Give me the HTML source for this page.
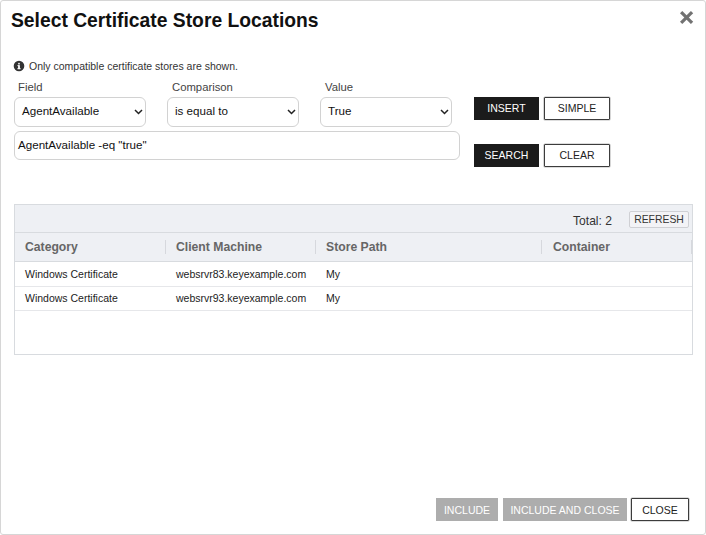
<!DOCTYPE html>
<html><head><meta charset="utf-8">
<style>
*{box-sizing:border-box;margin:0;padding:0}
html,body{width:706px;height:535px;overflow:hidden;background:#fff;font-family:"Liberation Sans",sans-serif}
.dlg{position:absolute;left:0;top:0;width:706px;height:535px;border:1px solid #d6d6d6;border-radius:3px;background:#fff}
.abs{position:absolute;white-space:nowrap}
.title{left:11px;top:7.8px;font-size:19.3px;font-weight:bold;color:#111;line-height:24px;transform:scaleY(1.05);transform-origin:50% 0}
.info{left:29px;top:59px;font-size:10.5px;color:#333;line-height:14px}
.lbl{top:80px;font-size:11.3px;color:#444;line-height:14px}
.sel{top:97px;width:132px;height:29.6px;border:1px solid #d2d2d2;border-radius:6px;background:#fff}
.sel span{position:absolute;left:7px;top:6px;font-size:11.6px;color:#111;line-height:14px}
.sel svg{position:absolute;right:2px;top:11px}
.inp{left:14px;top:131px;width:446px;height:29px;border:1px solid #d2d2d2;border-radius:6px;background:#fff}
.inp span{position:absolute;left:3px;top:6px;font-size:11.6px;color:#111;line-height:14px}
.btn{height:22px;font-size:10.5px;line-height:20px;padding-top:0;text-align:center;border:1px solid #3c3c3c;color:#222;background:#fff;border-radius:1px;box-shadow:0 0 0 0.6px rgba(60,60,60,.35)}
.btn.dark{background:#1b1b1b;color:#fff;border-color:#1b1b1b;box-shadow:none;border-radius:0}
.btn.gray{background:#adadad;color:#fff;border-color:#adadad;box-shadow:none;border-radius:0}
.tbl{left:14px;top:204px;width:679px;height:151px;border:1px solid #d8dbdf;background:#fff}
.bar{position:absolute;left:0;top:0;width:677px;height:28px;background:#eef0f4;border-bottom:1px solid #d8dbdf}
.hdr{position:absolute;left:0;top:28px;width:677px;height:29px;background:#eef0f4;border-bottom:1px solid #d8dbdf}
.hdr span{position:absolute;top:7px;font-size:12.2px;font-weight:bold;color:#666;line-height:14px}
.sep{position:absolute;top:7px;width:1px;height:14px;background:#d6d8dd}
.row{position:absolute;left:0;width:677px;height:25px;border-bottom:1px solid #e6e7ea}
.row span{position:absolute;top:5px;font-size:10.5px;color:#222;line-height:14px}
.r2 span{top:4px}
</style></head><body>
<div class="dlg">
</div>
<div class="abs title">Select Certificate Store Locations</div>
<svg class="abs" style="left:0;top:0" width="706" height="40"><g stroke="#727272" stroke-width="3.2"><line x1="681.15" y1="12.05" x2="692.05" y2="22.95"/><line x1="692.05" y1="12.05" x2="681.15" y2="22.95"/></g></svg>

<svg class="abs" style="left:13px;top:60px" width="12" height="12" viewBox="0 0 12 12"><circle cx="6" cy="6" r="5.3" fill="#333"/><rect x="5.1" y="5.2" width="1.8" height="3.9" fill="#fff"/><rect x="4.4" y="5.2" width="1.4" height="0.9" fill="#fff"/><rect x="4.3" y="8.3" width="3.4" height="0.9" fill="#fff"/><circle cx="6" cy="3.7" r="0.85" fill="#fff"/></svg>
<div class="abs info">Only compatible certificate stores are shown.</div>

<div class="abs lbl" style="left:18px">Field</div>
<div class="abs lbl" style="left:172px">Comparison</div>
<div class="abs lbl" style="left:325px">Value</div>

<div class="abs sel" style="left:14px"><span>AgentAvailable</span><svg width="9" height="6" viewBox="0 0 9 6"><path d="M1 1L4.5 4.5L8 1" fill="none" stroke="#222" stroke-width="1.5"/></svg></div>
<div class="abs sel" style="left:167px"><span>is equal to</span><svg width="9" height="6" viewBox="0 0 9 6"><path d="M1 1L4.5 4.5L8 1" fill="none" stroke="#222" stroke-width="1.5"/></svg></div>
<div class="abs sel" style="left:320px"><span>True</span><svg width="9" height="6" viewBox="0 0 9 6"><path d="M1 1L4.5 4.5L8 1" fill="none" stroke="#222" stroke-width="1.5"/></svg></div>
<div class="abs inp"><span>AgentAvailable -eq "true"</span></div>

<div class="abs btn dark" style="left:474px;top:97px;width:65px;height:23px">INSERT</div>
<div class="abs btn" style="left:544px;top:97px;width:66px;height:23px">SIMPLE</div>
<div class="abs btn dark" style="left:474px;top:144px;width:65px;height:23px">SEARCH</div>
<div class="abs btn" style="left:544px;top:144px;width:66px;height:23px">CLEAR</div>

<div class="abs tbl">
  <div class="bar">
    <span style="position:absolute;left:558px;top:9px;font-size:12.1px;color:#333;line-height:14px">Total: 2</span>
    <div style="position:absolute;left:614px;top:6px;width:60px;height:17px;border:1px solid #cfd0d4;border-radius:2px;background:#f3f3f6;font-size:10.4px;line-height:15px;text-align:center;color:#333">REFRESH</div>
  </div>
  <div class="hdr">
    <span style="left:10px">Category</span>
    <div class="sep" style="left:150px"></div>
    <span style="left:161px">Client Machine</span>
    <div class="sep" style="left:300px"></div>
    <span style="left:311px">Store Path</span>
    <div class="sep" style="left:526px"></div>
    <span style="left:538px">Container</span>
    <div class="sep" style="left:676px"></div>
  </div>
  <div class="row" style="top:57px"><span style="left:10px">Windows Certificate</span><span style="left:161px">websrvr83.keyexample.com</span><span style="left:311px">My</span></div>
  <div class="row r2" style="top:82px;height:24px"><span style="left:10px">Windows Certificate</span><span style="left:161px">websrvr93.keyexample.com</span><span style="left:311px">My</span></div>
</div>

<div class="abs btn gray" style="left:436px;top:498px;width:62px;height:23px;padding-top:1px">INCLUDE</div>
<div class="abs btn gray" style="left:503px;top:498px;width:124px;height:23px;padding-top:1px">INCLUDE AND CLOSE</div>
<div class="abs btn" style="left:631px;top:498px;width:58px;height:23px;padding-top:1px">CLOSE</div>
</body></html>
